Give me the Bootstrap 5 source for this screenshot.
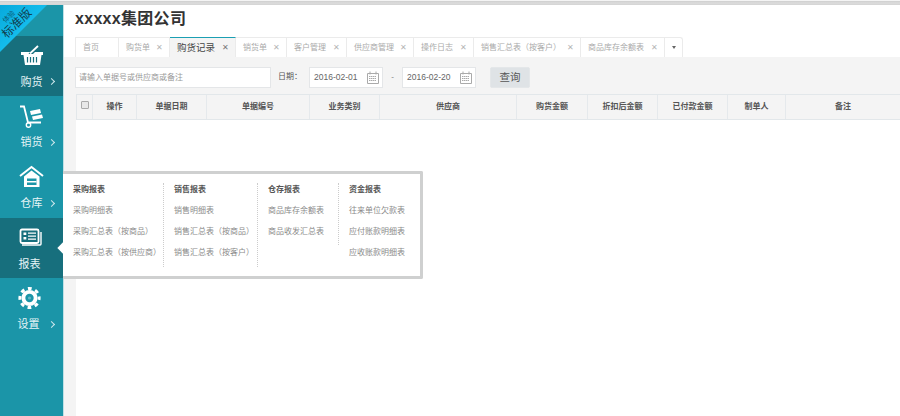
<!DOCTYPE html>
<html lang="zh">
<head>
    <meta charset="UTF-8">
    <meta name="viewport" content="width=device-width, initial-scale=1.0">
    <title>购货记录</title>
    <link href="https://cdn.jsdelivr.net/npm/bootstrap@5.3.0/dist/css/bootstrap.min.css" rel="stylesheet">
    <style>
        html, body { height: 100%; overflow: hidden; }
        body { font-family: "Liberation Sans", "Noto Sans CJK SC", sans-serif; font-size: 8px; color: #777; background: #fff; }
        .top-strip { height: 5px; background: linear-gradient(#f4f4f4 0, #f4f4f4 1px, #cfcfcf 1px, #dcdcdc 3px, #d4d4d4 5px); }
        .shell { height: 411px; position: relative; }
        .side { width: 64px; background: #1b95a8; flex: none; padding-top: 31px; border-right: 1px solid #bfe0e5; }
        .side-item { height: 61px; color: #e6f4f6; font-size: 11px; position: relative; text-align: center; }
        .side-item.on { background: #176f7d; height: 60px; }
        .side-icon { height: 36px; overflow: hidden; }
        .side-icon svg { display: block; width: 44px; height: 30px; margin-left: 10px; }
        .ic-a svg { margin-top: 4px; }
        .ic-b svg { margin-top: 5px; }
        .ic-c svg { margin-top: 6px; }
        .ic-d svg { margin-top: 6px; }
        .ic-e svg { margin-top: 6px; }
        .side-label { margin-top: 3px; line-height: 15px; }
        .side-label.label-left { padding-right: 4px; }
        .side-label.label-lefter { padding-right: 6px; }
        .side-arrow { position: absolute; left: 49px; bottom: 12px; width: 5px; height: 5px; border-top: 1px solid #cfe8ec; border-right: 1px solid #cfe8ec; transform: rotate(45deg); }
        .ribbon { position: absolute; left: 0; top: 0; width: 47px; height: 47px; background: linear-gradient(135deg, #07a9dc, #19c4f2 70%); clip-path: polygon(0 0, 100% 0, 0 100%); overflow: hidden; }
        .ribbon-small { position: absolute; left: -3px; top: 8px; width: 24px; font-size: 7px; text-align: center; color: #0b5d78; transform: rotate(-45deg); line-height: 8px; }
        .ribbon-big { position: absolute; left: -3px; top: 12px; width: 40px; font-size: 12px; text-align: center; color: #12404f; transform: rotate(-45deg); line-height: 13px; white-space: nowrap; }
        .main-area { flex: 1; min-width: 0; background: #fff; }
        .brand-row { height: 32px; padding-left: 11px; padding-top: 3px; font-size: 16px; font-weight: 700; color: #333; line-height: 22px; letter-spacing: .3px; }
        .tab-row { height: 20px; margin-left: 11px; }
        .tab-cell { height: 20px; border: 1px solid #ebebeb; border-left: 0; border-bottom: 0; padding: 0 0 0 7px; line-height: 19px; color: #aaa; white-space: nowrap; position: relative; background: #fff; }
        .tab-cell:first-child { border-left: 1px solid #ebebeb; }
        .tab-cell.on { border-top: 1px solid #1b9fb3; color: #444; background: #f4f4f4; font-size: 9.5px; }
        .tab-x { position: absolute; right: 6px; top: 0; color: #b5b5b5; font-size: 8px; }
        .tab-cell.on .tab-x { color: #777; }
        .tab-more { border-top-right-radius: 3px; padding: 0; }
        .tab-caret { display: block; margin: 8px auto 0; width: 0; height: 0; border: 2.5px solid transparent; border-top: 3px solid #666; border-bottom: 0; }
        .work { background: #f4f4f4; height: 359px; padding-left: 11px; position: relative; }
        .filter-row { height: 37px; padding-top: 10px; }
        .box-field { height: 21px; background: #fff; border: 1px solid #e4e6e8; line-height: 19px; padding-left: 3px; color: #9a9a9a; position: relative; }
        .box-search { width: 196px; }
        .box-date { width: 74px; font-size: 8.5px; color: #666; padding-left: 4px; }
        .box-date svg { position: absolute; right: 3px; top: 3px; width: 12px; height: 13px; }
        .date-label { width: 38px; padding-left: 7px; line-height: 20px; color: #555; }
        .date-sep { width: 19px; text-align: center; line-height: 20px; color: #777; }
        .query-btn { width: 40px; height: 21px; margin-left: 14px; background: #dfe3e6; border: 1px solid #e4e7e9; border-radius: 2px; color: #555; font-size: 10.5px; line-height: 19px; text-align: center; }
        .grid-wrap { margin-left: 1px; background: #fff; height: 322px; }
        .grid-head { height: 26px; background: #f4f4f4; border-top: 1px solid #e2e7ea; border-bottom: 1px solid #e2e7ea; border-left: 1px solid #e2e7ea; font-weight: 700; color: #555; line-height: 24px; text-align: center; }
        .grid-head > div { border-right: 1px solid #e5e9ec; flex: none; height: 24px; }
        .grid-head > div:last-child { border-right: 0; flex: 1; }
        .check-box { display: block; width: 8px; height: 8px; margin: 6px 0 0 4px; background: #e8e8e8; border: 1px solid #aaa; border-radius: 1px; }
        .report-pop { position: absolute; left: 63px; top: 166px; width: 360px; height: 108px; background: #fff; border: 3px solid #cfd0d0; border-left: 0; border-radius: 0 2px 2px 0; padding: 9px 0 0 10px; }
        .report-col { height: 84px; flex: none; line-height: 21.3px; border-right: 1px dotted #ccc; color: #8a8a8a; white-space: nowrap; }
        .report-col + .report-col { padding-left: 10px; }
        .report-col.short-col { height: 62px; }
        .report-col:last-child { border-right: 0; }
        .report-title { font-weight: 700; color: #555; line-height: 13px; margin-bottom: 3.5px; }
        .report-nub { position: absolute; left: -4px; top: 70px; width: 8px; height: 8px; background: #fff; transform: rotate(45deg); }
    </style>
</head>
<body>
    <div class="top-strip"></div>
    <div class="shell d-flex">
        <div class="side">
            <div class="side-item on">
                <div class="side-icon ic-a"><svg viewBox="0 0 44 30"><path d="M20 13.5 L28 6" stroke="#fff" stroke-width="1.8" fill="none"/><path d="M11 12 H20 L18.5 14 H23 L25 12 H33 V15 H31.5 L30 25 H15 L13.5 15 H11 Z" fill="#fff"/><path d="M17.5 17v5.5M20.5 17v5.5M23.5 17v5.5M26.5 17v5.5" stroke="#176f7d" stroke-width="1.2"/></svg></div>
                <div class="side-label">购货</div><span class="side-arrow"></span>
            </div>
            <div class="side-item">
                <div class="side-icon ic-b"><svg viewBox="0 0 44 30"><path d="M10 5.5 H14 L18 21.5 H31" stroke="#fff" stroke-width="1.8" fill="none"/><path d="M20 10 L30 8 L31 12 L21 14 Z M22 15.5 L32 13.5 L33 17 L23 19 Z" fill="#fff"/><circle cx="18.5" cy="24" r="2.2" fill="none" stroke="#fff" stroke-width="1.4"/></svg></div>
                <div class="side-label">销货</div><span class="side-arrow"></span>
            </div>
            <div class="side-item">
                <div class="side-icon ic-c"><svg viewBox="0 0 44 30"><path d="M10 13 L21.5 4 L33 13" stroke="#fff" stroke-width="2" fill="none"/><path d="M14 13.5 L21.5 7.5 L29.5 13.5 V24 H14 Z" fill="#fff"/><path d="M17 15.5 H26.5 V22 H17 Z" fill="#1b95a8"/><path d="M17 18 h9.5 v1.5 h-9.5 z" fill="#fff"/></svg></div>
                <div class="side-label">仓库</div><span class="side-arrow"></span>
            </div>
            <div class="side-item on">
                <div class="side-icon ic-d"><svg viewBox="0 0 44 30"><path d="M31 8 V20 Q31 21 30 21 H12" fill="none" stroke="#fff" stroke-width="1.4"/><rect x="10.5" y="5.5" width="18" height="13.5" rx="1.5" fill="none" stroke="#fff" stroke-width="1.8"/><path d="M13.5 8.5h2.8v2.5h-2.8zM13.5 13h2.8v2.5h-2.8zM18 8.5h8v1.3h-8zM18 11.5h8v1.3h-8zM18 14.5h8v1.3h-8z" fill="#fff"/></svg></div>
                <div class="side-label label-left">报表</div>
            </div>
            <div class="side-item">
                <div class="side-icon ic-e"><svg viewBox="0 0 44 30"><circle cx="19.5" cy="14" r="8" fill="#fff"/><circle cx="19.5" cy="14" r="9.6" fill="none" stroke="#fff" stroke-width="3" stroke-dasharray="3.8 3.74" stroke-dashoffset="1.9"/><circle cx="19.5" cy="14" r="4.2" fill="#1b95a8"/><circle cx="19.5" cy="14" r="1.6" fill="#5fb5c3"/></svg></div>
                <div class="side-label label-lefter">设置</div><span class="side-arrow"></span>
            </div>
        </div>
        <div class="ribbon">
            <div class="ribbon-small">体验</div>
            <div class="ribbon-big">标准版</div>
        </div>
        <div class="main-area">
            <div class="brand-row">xxxxx集团公司</div>
            <div class="tab-row d-flex">
                <div class="tab-cell" style="width:44px">首页</div>
                <div class="tab-cell" style="width:51px">购货单<span class="tab-x">✕</span></div>
                <div class="tab-cell on" style="width:66px">购货记录<span class="tab-x">✕</span></div>
                <div class="tab-cell" style="width:51px">销货单<span class="tab-x">✕</span></div>
                <div class="tab-cell" style="width:60px">客户管理<span class="tab-x">✕</span></div>
                <div class="tab-cell" style="width:67px">供应商管理<span class="tab-x">✕</span></div>
                <div class="tab-cell" style="width:60px">操作日志<span class="tab-x">✕</span></div>
                <div class="tab-cell" style="width:107px">销售汇总表（按客户）<span class="tab-x">✕</span></div>
                <div class="tab-cell" style="width:84px">商品库存余额表<span class="tab-x">✕</span></div>
                <div class="tab-cell tab-more" style="width:18px"><span class="tab-caret"></span></div>
            </div>
            <div class="work">
                <div class="filter-row d-flex">
                    <div class="box-field box-search">请输入单据号或供应商或备注</div>
                    <div class="date-label">日期：</div>
                    <div class="box-field box-date">2016-02-01
                        <svg viewBox="0 0 12 13"><path d="M.5 2.5h11v10H.5zM3 .5v3M9 .5v3" fill="none" stroke="#aaa"/><path d="M2 5.5h8M2 7.5h8M2 9.5h8M4 5v6M6 5v6M8 5v6" stroke="#aaa" stroke-dasharray="1 1"/></svg>
                    </div>
                    <div class="date-sep">-</div>
                    <div class="box-field box-date">2016-02-20
                        <svg viewBox="0 0 12 13"><path d="M.5 2.5h11v10H.5zM3 .5v3M9 .5v3" fill="none" stroke="#aaa"/><path d="M2 5.5h8M2 7.5h8M2 9.5h8M4 5v6M6 5v6M8 5v6" stroke="#aaa" stroke-dasharray="1 1"/></svg>
                    </div>
                    <div class="query-btn">查询</div>
                </div>
                <div class="grid-wrap">
                    <div class="grid-head d-flex">
                        <div style="width:16px"><span class="check-box"></span></div>
                        <div style="width:44px">操作</div>
                        <div style="width:70px">单据日期</div>
                        <div style="width:103px">单据编号</div>
                        <div style="width:70px">业务类别</div>
                        <div style="width:137px">供应商</div>
                        <div style="width:71px">购货金额</div>
                        <div style="width:70px">折扣后金额</div>
                        <div style="width:70px">已付款金额</div>
                        <div style="width:58px">制单人</div>
                        <div>备注</div>
                    </div>
                </div>
            </div>
        </div>
        <div class="report-pop d-flex">
            <span class="report-nub"></span>
            <div class="report-col" style="width:91px">
                <div class="report-title">采购报表</div>
                <div>采购明细表</div>
                <div>采购汇总表（按商品）</div>
                <div>采购汇总表（按供应商）</div>
            </div>
            <div class="report-col" style="width:94px">
                <div class="report-title">销售报表</div>
                <div>销售明细表</div>
                <div>销售汇总表（按商品）</div>
                <div>销售汇总表（按客户）</div>
            </div>
            <div class="report-col short-col" style="width:81px">
                <div class="report-title">仓存报表</div>
                <div>商品库存余额表</div>
                <div>商品收发汇总表</div>
            </div>
            <div class="report-col">
                <div class="report-title">资金报表</div>
                <div>往来单位欠款表</div>
                <div>应付账款明细表</div>
                <div>应收账款明细表</div>
            </div>
        </div>
    </div>
    <script src="https://cdn.jsdelivr.net/npm/bootstrap@5.3.0/dist/js/bootstrap.bundle.min.js"></script>
</body>
</html>
